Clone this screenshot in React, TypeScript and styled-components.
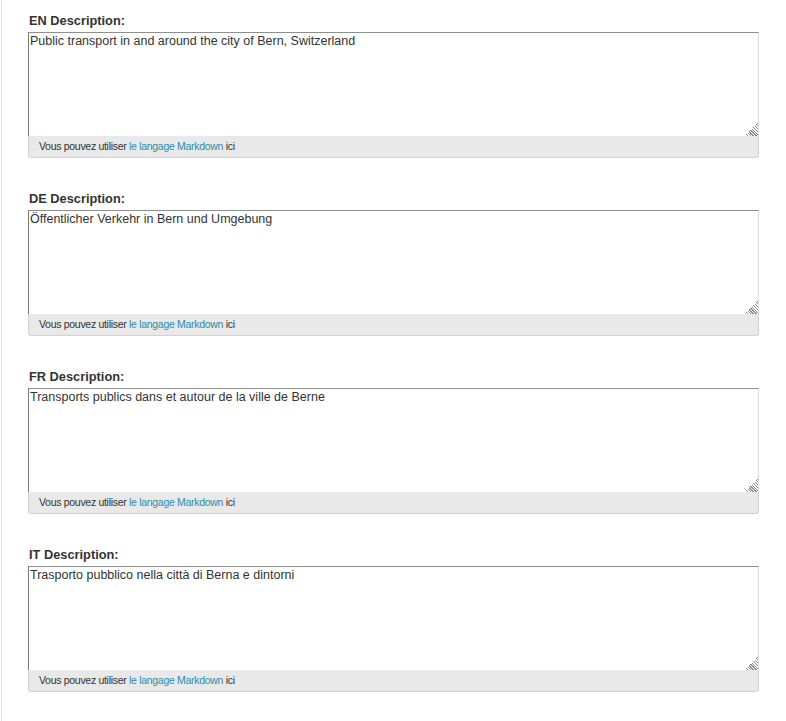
import React from "react";
import styled, { createGlobalStyle } from "styled-components";

const GlobalStyle = createGlobalStyle`
  html, body {
    margin: 0;
    padding: 0;
    background: #ffffff;
  }
  body {
    font-family: "Liberation Sans", Arial, Helvetica, sans-serif;
    color: #333333;
  }
`;

const Page = styled.div`
  box-sizing: border-box;
  min-height: 100vh;
  margin-left: 1px;
  border-left: 1px solid #e2e2e2;
  padding: 12px 27px 20px 26px;
  display: flex;
  flex-direction: column;
  gap: 32px;
`;

const Field = styled.div`
  display: flex;
  flex-direction: column;
`;

const Label = styled.label`
  font-size: 12.8px;
  font-weight: bold;
  line-height: 18px;
  color: #333333;
  padding-left: 1px;
  margin-bottom: 2px;
`;

const TextArea = styled.textarea`
  display: block;
  box-sizing: border-box;
  width: 100%;
  height: 104px;
  margin: 0;
  padding: 1px 2px 1px 1px;
  font-family: "Liberation Sans", Arial, Helvetica, sans-serif;
  font-size: 12.5px;
  line-height: 15px;
  color: #333333;
  background: #ffffff;
  border-style: solid;
  border-width: 1px 1px 0 1px;
  border-color: #8f8f8f #dddddd #dddddd #7a7a7a;
  border-radius: 0;
  outline: none;
  resize: vertical;

  &::-webkit-resizer {
    background:
      linear-gradient(135deg, #ffffff 55%, transparent 55%),
      repeating-linear-gradient(45deg, #ffffff 0 1px, #8c8c8c 1px 2px);
  }
`;

const Hint = styled.div`
  box-sizing: border-box;
  background: #e9e9e9;
  border: 1px solid #d2d2d2;
  border-top: none;
  border-radius: 0 0 3px 3px;
  font-size: 10.5px;
  letter-spacing: -0.3px;
  line-height: 21px;
  padding-left: 10px;
  color: #333333;
`;

const HintLink = styled.a`
  color: #2f8aab;
  text-decoration: none;
`;

const fields = [
  { lang: "EN", text: "Public transport in and around the city of Bern, Switzerland" },
  { lang: "DE", text: "Öffentlicher Verkehr in Bern und Umgebung" },
  { lang: "FR", text: "Transports publics dans et autour de la ville de Berne" },
  { lang: "IT", text: "Trasporto pubblico nella città di Berna e dintorni" },
];

export default function App() {
  return (
    <>
      <GlobalStyle />
      <Page>
        {fields.map((f) => (
          <Field key={f.lang}>
            <Label htmlFor={`desc-${f.lang}`}>{f.lang} Description:</Label>
            <TextArea id={`desc-${f.lang}`} defaultValue={f.text} />
            <Hint>
              Vous pouvez utiliser <HintLink href="#">le langage Markdown</HintLink> ici
            </Hint>
          </Field>
        ))}
      </Page>
    </>
  );
}
